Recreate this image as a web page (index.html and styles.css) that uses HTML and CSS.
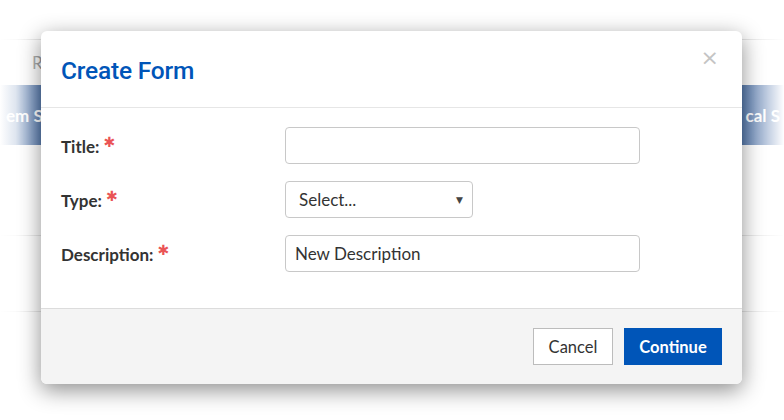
FILE: index.html
```html
<!DOCTYPE html>
<html lang="en">
<head>
  <meta charset="UTF-8">
  <title>Create Form</title>
  <link rel="stylesheet" href="styles.css">
</head>
<body>

<div class="page">
  <div class="page-top"></div>
  <div class="tabs"><span class="tab">R</span></div>
  <div class="bar">
    <span class="bar-left">em S</span>
    <span class="bar-right">cal S</span>
  </div>
  <div class="row-space"></div>
  <div class="row-line"></div>
  <div class="row-line short"></div>
</div>
<div class="fade"></div>

<div class="modal">
  <div class="modal-header">
    <h2 class="modal-title">Create Form</h2>
    <span class="close">&times;</span>
  </div>

  <div class="modal-body">
    <label class="field-label">Title: <span class="req">&#10033;</span></label>
    <input type="text" class="field wide">

    <label class="field-label">Type: <span class="req">&#10033;</span></label>
    <div class="select">
      <span>Select...</span>
      <span class="caret">&#9660;</span>
    </div>

    <label class="field-label">Description: <span class="req">&#10033;</span></label>
    <input type="text" class="field wide" value="New Description">
  </div>

  <div class="modal-footer">
    <button class="btn btn-default">Cancel</button>
    <button class="btn btn-primary">Continue</button>
  </div>
</div>

</body>
</html>
```

FILE: styles.css
```css
body {
  margin: 0;
  font-family: 'Lato', 'Liberation Sans', sans-serif;
  background: #fff;
  color: #333;
  width: 784px;
  height: 420px;
  overflow: hidden;
  position: relative;
}
.page-top {
  height: 39px;
  border-bottom: 1px solid #e4e4e4;
}
.tabs {
  height: 45px;
  padding-left: 32px;
  display: flex;
  align-items: center;
}
.tab {
  color: #999;
  font-size: 17px;
}
.bar {
  height: 60px;
  background: #5a7db0;
  color: #fff;
  font-weight: bold;
  font-size: 17px;
  display: flex;
  align-items: center;
  justify-content: space-between;
  padding: 0 4px 0 6px;
}
.row-space {
  height: 90px;
}
.row-line {
  height: 75px;
  border-top: 1px solid #e4e4e4;
}
.fade {
  position: absolute;
  inset: 0;
  background: linear-gradient(to right, #fff 0, rgba(255,255,255,0.8) 16px, rgba(255,255,255,0.3) 32px, rgba(255,255,255,0) 42px, rgba(255,255,255,0) 742px, rgba(255,255,255,0.4) 758px, #fff 784px);
}

.modal {
  position: absolute;
  left: 41px;
  top: 31px;
  width: 701px;
  background: #fff;
  border-radius: 6px;
  box-shadow: 0 6px 22px rgba(0,0,0,0.45);
  overflow: hidden;
}
.modal-header {
  height: 76px;
  border-bottom: 1px solid #e6e6e6;
  padding: 0 20px;
  display: flex;
  align-items: center;
  justify-content: space-between;
}
.modal-title {
  margin: 0;
  font-family: 'Roboto', sans-serif;
  font-weight: 500;
  font-size: 24.5px;
  color: #0055b8;
  letter-spacing: -0.2px;
  padding-top: 2px;
}
.close {
  color: #c4c4c4;
  font-size: 22px;
  font-family: 'DejaVu Sans', sans-serif;
  margin-top: -23px;
  margin-right: 3px;
}
.modal-body {
  padding: 19px 20px 36px;
  display: grid;
  grid-template-columns: 224px 1fr;
  row-gap: 17px;
  align-items: center;
}
.field-label {
  font-weight: bold;
  font-size: 17px;
  color: #333;
  line-height: 20px;
  margin-top: -2px;
}
.req {
  color: #ea5455;
  font-size: 14px;
  vertical-align: 6px;
  font-family: 'DejaVu Sans', sans-serif;
}
.field {
  height: 37px;
  box-sizing: border-box;
  border: 1px solid #c8c8c8;
  border-radius: 4px;
  font-family: 'Lato', sans-serif;
  font-size: 17px;
  color: #333;
  padding: 0 9px;
  margin: 0;
}
.wide {
  width: 355px;
}
.select {
  width: 188px;
  height: 37px;
  box-sizing: border-box;
  border: 1px solid #c8c8c8;
  border-radius: 4px;
  font-size: 17px;
  color: #333;
  padding: 0 9px 0 13px;
  display: flex;
  align-items: center;
  justify-content: space-between;
}
.caret {
  font-size: 9px;
  color: #444;
  font-family: 'DejaVu Sans', sans-serif;
}
.modal-footer {
  height: 75px;
  background: #f4f4f4;
  border-top: 1px solid #dcdcdc;
  padding: 0 20px;
  display: flex;
  align-items: center;
  justify-content: flex-end;
  gap: 11px;
}
.btn {
  height: 37px;
  font-family: 'Lato', sans-serif;
  font-size: 16.5px;
  cursor: pointer;
  border-radius: 0;
}
.btn-default {
  width: 80px;
  background: #fff;
  border: 1px solid #bcbcbc;
  color: #333;
}
.btn-primary {
  width: 98px;
  background: #0055b8;
  border: none;
  color: #fff;
  font-weight: bold;
}
```
